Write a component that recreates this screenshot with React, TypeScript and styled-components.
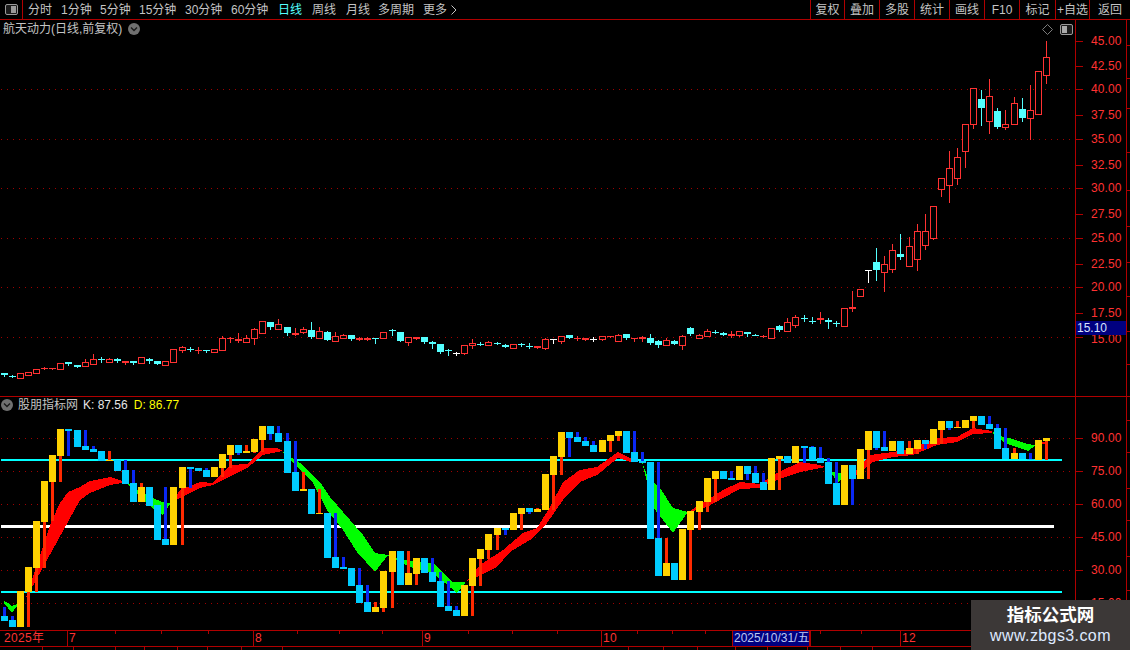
import styled, { createGlobalStyle } from "styled-components";

const FONT = `"Liberation Sans", "Noto Sans CJK SC", sans-serif`;
const LINE_RED = "#b00000";
const TEXT_RED = "#ff3232";
const CANDLE_RED = "#ff3232";
const CANDLE_CYAN = "#54ffff";

const GlobalStyle = createGlobalStyle`
  html, body {
    margin: 0;
    padding: 0;
    background: #000;
  }
`;

const Page = styled.div`
  position: relative;
  width: 1130px;
  height: 650px;
  overflow: hidden;
  background: #000;
  color: #c4c4c4;
  font: 12px/14px ${FONT};
`;

const Toolbar = styled.div`
  display: flex;
  height: 19px;
  border-bottom: 1px solid ${LINE_RED};
`;

const IconCell = styled.div`
  display: flex;
  align-items: center;
  justify-content: center;
  flex: none;
  width: 23px;
  border-right: 1px solid ${LINE_RED};
  box-sizing: border-box;
`;

const Periods = styled.div`
  display: flex;
  align-items: center;
  flex: 1;
  padding-left: 5px;
`;

const Period = styled.span<{ $w: number; $active?: boolean }>`
  display: flex;
  align-items: center;
  gap: 4px;
  flex: none;
  width: ${(p) => p.$w}px;
  color: ${(p) => (p.$active ? "#54ffff" : "#c4c4c4")};
  white-space: nowrap;
`;

const Actions = styled.div`
  display: flex;
`;

const Action = styled.span<{ $w: number }>`
  display: flex;
  align-items: center;
  justify-content: center;
  width: ${(p) => p.$w}px;
  box-sizing: border-box;
  border-left: 1px solid ${LINE_RED};
  white-space: nowrap;
`;

const Panel = styled.div<{ $h: number }>`
  display: flex;
  height: ${(p) => p.$h}px;
`;

const MainPanel = styled(Panel)`
  border-bottom: 1px solid ${LINE_RED};
`;

const ChartArea = styled.div`
  position: relative;
  flex: none;
  width: 1075px;
`;

const ChartSvg = styled.svg`
  display: block;
  width: 100%;
  height: 100%;
`;

const Legend = styled.div<{ $top: number }>`
  position: absolute;
  top: ${(p) => p.$top}px;
  left: 1px;
  display: flex;
  align-items: center;
  height: 14px;
  white-space: nowrap;
`;

const Title = styled.span`
  margin: 0 6px 0 2px;
`;

const IndicatorName = styled.span`
  margin: 0 5px;
`;

const Reading = styled.span<{ $color: string }>`
  margin-right: 6px;
  color: ${(p) => p.$color};
`;

const CornerIcons = styled.div`
  position: absolute;
  top: 4px;
  right: 2px;
  display: flex;
  align-items: center;
  gap: 7px;
`;

const Axis = styled.div`
  position: relative;
  flex: 1;
  border-left: 1px solid ${LINE_RED};
`;

const AxisTicks = styled.svg`
  position: absolute;
  inset: 0;
  width: 100%;
  height: 100%;
`;

const AxisLabel = styled.span`
  position: absolute;
  left: 15px;
  color: ${TEXT_RED};
  line-height: 8px;
  letter-spacing: 0.1px;
`;

const PriceTag = styled.span`
  position: absolute;
  left: 0;
  top: 301px;
  width: 50px;
  height: 14px;
  padding-left: 1px;
  box-sizing: border-box;
  background: #000080;
  color: #d8e4ff;
  line-height: 14px;
`;

const TimeAxis = styled.div`
  display: flex;
  height: 15px;
  border-top: 1px solid ${LINE_RED};
  border-bottom: 1px solid ${LINE_RED};
`;

const TimeCell = styled.span<{ $w: number; $first?: boolean }>`
  position: relative;
  flex: none;
  width: ${(p) => p.$w}px;
  padding-left: ${(p) => (p.$first ? 4 : 1)}px;
  box-sizing: border-box;
  border-left: ${(p) => (p.$first ? "none" : `1px solid ${LINE_RED}`)};
  color: ${TEXT_RED};
  line-height: 15px;
  letter-spacing: 0.3px;
`;

const DateCell = styled.span`
  flex: none;
  width: 78px;
  padding-left: 1px;
  box-sizing: border-box;
  border-left: 1px solid ${LINE_RED};
  border-right: 1px solid ${LINE_RED};
  background: #000080;
  color: #bcc8f0;
  line-height: 15px;
  white-space: nowrap;
`;

const TimeTick = styled.i`
  position: absolute;
  top: 0;
  width: 1px;
  height: 3px;
  background: ${LINE_RED};
`;

const BottomStrip = styled.svg`
  display: block;
  width: 1130px;
  height: 3px;
`;

const Watermark = styled.div`
  position: absolute;
  right: 0;
  bottom: 0;
  display: flex;
  flex-direction: column;
  align-items: center;
  width: 159px;
  height: 50px;
  padding-top: 4px;
  box-sizing: border-box;
  background: #3c3837;
`;

const WatermarkTitle = styled.span`
  color: #fff;
  font-size: 17.5px;
  font-weight: 700;
  line-height: 22px;
`;

const WatermarkUrl = styled.span`
  color: #dfeaff;
  font-size: 16px;
  line-height: 20px;
  letter-spacing: 0.4px;
`;

type CandleKind = "r" | "s" | "c" | "w";
type Candle = [CandleKind, number, number, number?, number?];

// price candles, in page pixels: kind, body top, body bottom, high, low
const CANDLES: Candle[] = [
  ["c", 373, 375, 373, 376], ["c", 376, 377, 375, 377], ["r", 373, 378], ["r", 372, 375], ["r", 369, 373],
  ["s", 368, 369, 367, 369], ["s", 368, 369], ["r", 363, 369], ["c", 362, 364, 362, 365], ["c", 365, 367],
  ["r", 362, 366, 359, 366], ["r", 359, 364, 354, 364], ["c", 359, 360, 357, 362], ["r", 359, 362, 358, 362], ["c", 359, 361, 358, 362],
  ["s", 361, 363, 361, 364], ["c", 361, 363, 361, 364], ["r", 357, 363], ["c", 359, 361, 358, 363], ["c", 361, 364],
  ["r", 361, 365], ["r", 349, 362], ["r", 347, 350, 346, 352], ["c", 349, 350, 347, 351], ["s", 350, 350, 347, 353],
  ["c", 350, 351, 350, 352], ["r", 349, 352], ["r", 338, 350, 336, 350], ["s", 338, 339, 337, 342], ["s", 339, 341, 333, 342],
  ["r", 338, 342, 335, 342], ["r", 329, 338, 328, 344], ["r", 321, 333], ["c", 322, 327, 322, 329], ["r", 324, 329, 319, 329],
  ["c", 327, 333, 327, 335], ["s", 333, 335, 328, 335], ["r", 329, 332, 327, 333], ["c", 330, 337, 322, 338], ["r", 331, 338, 327, 338],
  ["c", 332, 340, 331, 340], ["r", 336, 341, 332, 341], ["r", 335, 338, 334, 338], ["c", 335, 339, 335, 340], ["s", 338, 340, 337, 340],
  ["s", 338, 340, 337, 340], ["c", 338, 339, 338, 343], ["r", 332, 338], ["c", 330, 331, 329, 335], ["c", 332, 341, 332, 341],
  ["r", 337, 342, 337, 345], ["s", 337, 339], ["c", 337, 342, 337, 343], ["c", 342, 344, 341, 348], ["c", 344, 352, 344, 353],
  ["c", 350, 351, 349, 355], ["w", 353, 354, 352, 355], ["r", 345, 353, 345, 354], ["r", 343, 345, 339, 348], ["c", 344, 344, 342, 345],
  ["r", 342, 345, 341, 345], ["c", 343, 344, 342, 344], ["c", 345, 347, 344, 347], ["r", 344, 348], ["c", 344, 345, 343, 346],
  ["c", 346, 346, 343, 348], ["s", 346, 348], ["r", 339, 348, 338, 349], ["w", 339, 340, 339, 343], ["r", 336, 341, 336, 343],
  ["c", 335, 338], ["s", 338, 339, 336, 340], ["s", 338, 340], ["w", 339, 339, 337, 341], ["r", 336, 339, 336, 340],
  ["s", 336, 337], ["r", 335, 341, 334, 341], ["c", 334, 338, 334, 339], ["s", 338, 339, 338, 341], ["s", 337, 339, 336, 341],
  ["c", 338, 343, 334, 344], ["c", 341, 345, 340, 347], ["r", 340, 345, 338, 345], ["c", 341, 344, 340, 344], ["r", 336, 345, 335, 349],
  ["c", 328, 334, 327, 335], ["r", 335, 338, 334, 338], ["r", 331, 336, 329, 336], ["c", 332, 333, 330, 333], ["c", 333, 335, 332, 335],
  ["s", 334, 336, 331, 337], ["r", 331, 335, 331, 336], ["c", 332, 334, 332, 336], ["c", 335, 335, 334, 335], ["s", 336, 337, 335, 337],
  ["r", 328, 338], ["c", 326, 330, 325, 331], ["r", 322, 331, 318, 331], ["r", 317, 325, 315, 327], ["c", 318, 319, 315, 321],
  ["c", 321, 322, 317, 323], ["s", 318, 320, 312, 323], ["c", 320, 322, 318, 328], ["c", 323, 324, 321, 326], ["r", 308, 326],
  ["s", 307, 309, 291, 311], ["r", 289, 296], ["w", 270, 271, 270, 282], ["c", 262, 270, 248, 280], ["r", 264, 272, 256, 291],
  ["r", 250, 269, 244, 272], ["c", 254, 257, 234, 259], ["r", 246, 266, 237, 266], ["r", 231, 259, 224, 270], ["r", 231, 245, 214, 249],
  ["r", 206, 238, 206, 239], ["r", 178, 189, 178, 196], ["r", 168, 185, 151, 202], ["r", 157, 178, 148, 184], ["r", 124, 151, 124, 167],
  ["r", 88, 124, 88, 128], ["c", 99, 108, 90, 125], ["r", 96, 121, 79, 133], ["c", 111, 127, 108, 128], ["r", 124, 127, 110, 129],
  ["r", 103, 124, 97, 124], ["c", 109, 118, 98, 121], ["r", 110, 118, 85, 139], ["r", 71, 114], ["r", 57, 75, 41, 83],
];

type Bar = ["g" | "b", number, number, number?, number?];

// indicator bars: kind, body top, body bottom, thin bar top, thin bar bottom
const BARS: Bar[] = [
  ["b", 616, 621, 607, 616], ["b", 620, 627, 616, 620], ["g", 591, 627], ["g", 567, 592, 592, 627], ["g", 521, 568, 568, 592],
  ["g", 481, 522, 522, 568], ["g", 455, 482, 482, 521], ["g", 429, 456, 456, 482], ["b", 429, 431, 431, 456], ["b", 430, 447],
  ["b", 446, 450, 430, 446], ["b", 449, 452, 446, 449], ["b", 451, 461], ["g", 460, 461, 451, 460], ["b", 460, 471],
  ["b", 470, 484, 460, 470], ["b", 483, 502, 470, 483], ["g", 487, 502, 483, 487], ["b", 487, 506], ["b", 505, 540],
  ["b", 539, 545, 487, 539], ["g", 487, 545], ["g", 467, 488, 488, 545], ["b", 467, 469, 469, 488], ["b", 468, 471],
  ["b", 470, 477, 468, 470], ["g", 467, 477], ["g", 454, 468, 468, 477], ["g", 445, 455, 455, 468], ["b", 445, 453, 453, 455],
  ["g", 451, 453, 445, 451], ["g", 439, 452, 452, 453], ["g", 426, 440, 440, 452], ["b", 426, 434, 434, 440], ["b", 433, 442, 426, 433],
  ["b", 441, 473, 433, 441], ["b", 472, 491, 441, 472], ["g", 489, 491, 472, 489], ["b", 489, 514], ["g", 513, 514, 489, 513],
  ["b", 513, 558], ["b", 557, 568, 513, 557], ["b", 567, 569, 557, 567], ["b", 568, 586], ["b", 585, 603, 568, 585],
  ["b", 602, 612, 585, 602], ["g", 607, 612, 602, 607], ["g", 571, 608, 608, 612], ["g", 551, 572, 572, 608], ["b", 551, 585],
  ["g", 573, 585, 551, 573], ["g", 558, 574, 574, 585], ["b", 558, 573], ["b", 572, 582, 558, 572], ["b", 581, 607, 572, 581],
  ["b", 606, 611, 581, 606], ["b", 610, 616, 606, 610], ["g", 585, 616], ["g", 558, 586, 586, 616], ["g", 549, 559, 559, 586],
  ["g", 534, 550, 550, 559], ["g", 528, 535, 535, 550], ["b", 528, 530, 530, 535], ["g", 513, 530], ["g", 508, 514, 514, 530],
  ["b", 508, 512, 512, 514], ["g", 509, 512, 508, 509], ["g", 474, 510], ["g", 456, 475, 475, 510], ["g", 432, 457, 457, 475],
  ["b", 432, 438, 438, 457], ["b", 437, 442, 432, 437], ["b", 441, 446, 437, 441], ["b", 445, 452, 441, 445], ["g", 440, 452],
  ["g", 435, 441, 441, 452], ["g", 431, 436, 436, 441], ["b", 431, 453], ["b", 452, 462, 431, 452], ["b", 461, 463, 452, 461],
  ["b", 462, 539], ["b", 538, 576, 462, 538], ["g", 563, 576, 538, 563], ["b", 563, 580], ["g", 529, 580],
  ["g", 511, 530, 530, 580], ["g", 501, 512, 512, 530], ["g", 478, 502, 502, 512], ["g", 471, 479, 479, 502], ["b", 471, 479],
  ["b", 478, 480, 471, 478], ["g", 466, 480], ["b", 466, 474, 474, 480], ["b", 473, 483, 466, 473], ["b", 482, 490, 473, 482],
  ["g", 458, 490], ["g", 456, 459, 459, 490], ["b", 456, 463], ["g", 446, 463], ["b", 446, 448, 448, 463],
  ["b", 447, 460, 446, 447], ["b", 458, 463, 447, 458], ["b", 462, 484, 458, 462], ["b", 483, 505, 462, 483], ["g", 465, 505],
  ["b", 465, 479, 479, 505], ["g", 449, 479], ["g", 431, 450, 450, 479], ["b", 431, 448, 448, 450], ["b", 447, 451, 431, 447],
  ["g", 441, 451], ["b", 441, 454], ["g", 448, 454, 441, 448], ["g", 440, 449, 449, 454], ["b", 440, 444, 444, 449],
  ["g", 429, 444], ["g", 421, 430, 430, 444], ["b", 421, 428, 428, 430], ["g", 427, 428, 421, 427], ["g", 420, 428],
  ["g", 416, 421, 421, 428], ["b", 416, 425], ["b", 424, 429, 416, 424], ["b", 428, 449, 424, 428], ["b", 448, 459, 428, 448],
  ["g", 453, 459, 448, 453], ["b", 453, 459], ["b", 459, 460, 453, 459], ["g", 440, 460], ["g", 438, 441, 441, 460],
];

type Pt = [number, number];
type RibbonPart = { color: string; top: Pt[]; bottom: Pt[] };

const RED = "#ff0000";
const GREEN = "#00ff00";

const RIBBON: RibbonPart[] = [
  { color: GREEN, top: [[4, 601], [8, 603], [12, 606], [17, 604]], bottom: [[4, 603], [8, 608], [12, 613], [17, 606]] },
  { color: RED, top: [[25, 600], [52, 520], [60, 503], [68, 492], [80, 487], [90, 481], [110, 477], [122, 481]], bottom: [[25, 600], [69, 520], [80, 500], [90, 493], [110, 485], [122, 483]] },
  { color: GREEN, top: [[126, 482], [135, 488], [150, 497], [165, 503], [170, 503]], bottom: [[126, 482], [140, 497], [155, 510], [163, 515], [170, 504]] },
  { color: RED, top: [[171, 503], [180, 490], [200, 482], [213, 483], [230, 465], [247, 464], [263, 448], [277, 448], [283, 451]], bottom: [[171, 503], [180, 498], [200, 488], [213, 485], [233, 475], [247, 468], [263, 455], [277, 452], [283, 451]] },
  { color: GREEN, top: [[283, 452], [300, 463], [320, 482], [330, 497], [350, 520], [363, 535], [375, 553], [388, 555]], bottom: [[283, 452], [300, 470], [313, 483], [327, 510], [343, 530], [357, 552], [375, 572], [388, 555]] },
  { color: GREEN, top: [[388, 555], [403, 560], [433, 563], [453, 582], [465, 582]], bottom: [[388, 556], [410, 567], [433, 573], [457, 593], [465, 583]] },
  { color: RED, top: [[467, 581], [480, 565], [503, 550], [523, 533], [537, 528], [550, 507], [563, 482], [580, 470], [597, 467], [618, 452], [630, 458], [640, 461]], bottom: [[467, 581], [477, 577], [497, 567], [510, 552], [533, 538], [547, 523], [563, 500], [580, 482], [597, 475], [618, 458], [630, 462], [640, 461]] },
  { color: GREEN, top: [[642, 462], [648, 478], [660, 488], [673, 508], [688, 512]], bottom: [[642, 462], [653, 507], [673, 533], [688, 512]] },
  { color: RED, top: [[690, 511], [707, 500], [723, 490], [740, 482], [760, 484], [777, 473], [800, 462], [820, 465], [825, 467]], bottom: [[690, 512], [707, 507], [723, 498], [740, 489], [760, 488], [777, 480], [800, 472], [820, 468], [825, 467]] },
  { color: GREEN, top: [[826, 467], [830, 472], [843, 473], [848, 475]], bottom: [[826, 467], [838, 482], [848, 475]] },
  { color: RED, top: [[849, 476], [857, 470], [870, 455], [893, 452], [913, 448], [937, 438], [957, 437], [973, 428], [992, 431]], bottom: [[849, 478], [857, 475], [873, 462], [893, 457], [913, 455], [937, 445], [957, 442], [973, 434], [992, 433]] },
  { color: GREEN, top: [[993, 432], [1003, 437], [1010, 438], [1027, 444], [1035, 445]], bottom: [[993, 433], [997, 438], [1010, 445], [1028, 451], [1035, 446]] },
  { color: RED, top: [[1036, 445], [1042, 442], [1048, 442]], bottom: [[1036, 446], [1042, 444], [1048, 444]] },
];

const PERIODS: [string, number][] = [
  ["分时", 33], ["1分钟", 39], ["5分钟", 39], ["15分钟", 46], ["30分钟", 46], ["60分钟", 47],
  ["日线", 34], ["周线", 34], ["月线", 32], ["多周期", 45],
];

const ACTIONS: [string, number][] = [
  ["复权", 34], ["叠加", 35], ["多股", 35], ["统计", 35], ["画线", 35],
  ["F10", 35], ["标记", 36], ["+自选", 34], ["返回", 41],
];

const PRICE_LABELS: [string, number][] = [
  ["45.00", 41], ["42.50", 66], ["40.00", 89], ["37.50", 115], ["35.00", 139], ["32.50", 165],
  ["30.00", 188], ["27.50", 214], ["25.00", 238], ["22.50", 264], ["20.00", 287], ["17.50", 313], ["15.00", 339],
];

const KD_LABELS: [string, number][] = [
  ["90.00", 438], ["75.00", 471], ["60.00", 504], ["45.00", 537], ["30.00", 570], ["15.00", 603],
];

const PRICE_DOTS = [89, 139, 188, 238, 287, 337];
const KD_DOTS = [438, 471, 504, 537, 570, 603];
const LOWER_TICKS = [42, 73, 115, 144, 177, 207, 241, 282, 628, 663, 697, 735, 767, 807, 840, 872];

const candleX = (i: number) => Math.floor(4.3 + 8.078 * i);

function PanelIcon({ flip }: { flip?: boolean }) {
  return (
    <svg width="13" height="11" viewBox="0 0 13 11">
      <rect x="0.5" y="0.5" width="12" height="10" rx="1.5" fill="#1c1c1c" stroke="#9a9a9a" />
      <rect x={flip ? 2 : 6} y="2" width="5" height="7" fill={flip ? "#aaa" : "#9a9a9a"} />
    </svg>
  );
}

function ChevronBadge() {
  return (
    <svg width="12" height="12" viewBox="0 0 12 12">
      <circle cx="6" cy="6" r="6" fill="#707070" />
      <path d="M3 4.5 6 7.5 9 4.5" fill="none" stroke="#1a1a1a" strokeWidth="1.4" />
    </svg>
  );
}

function Diamond() {
  return (
    <svg width="11" height="11" viewBox="0 0 11 11">
      <path d="M5.5.5 10.5 5.5 5.5 10.5.5 5.5Z" fill="none" stroke="#7c7c7c" />
    </svg>
  );
}

function MoreArrow() {
  return (
    <svg width="6" height="10" viewBox="0 0 6 10">
      <path d="M.5.5 5 5 .5 9.5" fill="none" stroke="#c4c4c4" />
    </svg>
  );
}

function DottedLines({ rows }: { rows: number[] }) {
  return (
    <>
      {rows.map((y) => (
        <line key={y} x1="1" x2="1075" y1={y + 0.5} y2={y + 0.5} stroke="#a00000" strokeDasharray="1 5" />
      ))}
    </>
  );
}

function PriceCandle({ c, i }: { c: Candle; i: number }) {
  const [kind, top, bot, hi = top, lo = bot] = c;
  const x = candleX(i);
  const color = kind === "c" ? CANDLE_CYAN : kind === "w" ? "#ffffff" : CANDLE_RED;
  return (
    <g>
      <line x1={x + 0.5} x2={x + 0.5} y1={hi} y2={lo + 1} stroke={color} />
      {kind === "r" ? (
        <rect x={x - 2.5} y={top + 0.5} width="6" height={bot - top} fill="#000" stroke={color} />
      ) : (
        <rect x={x - 3} y={top} width="7" height={Math.max(bot - top, 1)} fill={color} />
      )}
    </g>
  );
}

function KdBar({ b, i }: { b: Bar; i: number }) {
  const [kind, top, bot, wickTop, wickBot] = b;
  const x = candleX(i);
  const up = kind === "g";
  return (
    <g>
      {wickTop !== undefined && wickBot !== undefined ? (
        <rect x={x - 1} y={wickTop} width="3" height={wickBot - wickTop} fill={up ? "#ff2a00" : "#0a28f5"} />
      ) : null}
      <rect x={x - 3} y={top} width="7" height={bot - top} fill={up ? "#ffd200" : "#00ccff"} />
    </g>
  );
}

function RightScale({ ticks, extra, offset }: { ticks: number[]; extra: number[]; offset: number }) {
  return (
    <AxisTicks shapeRendering="crispEdges">
      {ticks.map((y) => (
        <line key={y} x1="0" x2="7" y1={y - offset + 0.5} y2={y - offset + 0.5} stroke={LINE_RED} />
      ))}
      <line x1="50.5" x2="50.5" y1="0" y2="400" stroke={LINE_RED} />
      {extra.map((y) => (
        <line key={y} x1="51" x2="55" y1={y - offset + 0.5} y2={y - offset + 0.5} stroke={LINE_RED} />
      ))}
    </AxisTicks>
  );
}

export default function App() {
  return (
    <Page>
      <GlobalStyle />
      <Toolbar>
        <IconCell>
          <PanelIcon />
        </IconCell>
        <Periods>
          {PERIODS.map(([label, w]) => (
            <Period key={label} $w={w} $active={label === "日线"}>
              {label}
            </Period>
          ))}
          <Period $w={40}>
            更多
            <MoreArrow />
          </Period>
        </Periods>
        <Actions>
          {ACTIONS.map(([label, w]) => (
            <Action key={label} $w={w}>
              {label}
            </Action>
          ))}
        </Actions>
      </Toolbar>

      <MainPanel $h={376}>
        <ChartArea>
          <ChartSvg viewBox="0 20 1075 376" shapeRendering="crispEdges">
            <DottedLines rows={PRICE_DOTS} />
            {CANDLES.map((c, i) => (
              <PriceCandle key={i} c={c} i={i} />
            ))}
          </ChartSvg>
          <Legend $top={2}>
            <Title>航天动力(日线,前复权)</Title>
            <ChevronBadge />
          </Legend>
          <CornerIcons>
            <Diamond />
            <PanelIcon flip />
          </CornerIcons>
        </ChartArea>
        <Axis>
          <RightScale
            offset={20}
            ticks={[41, 66, 89, 115, 139, 165, 188, 214, 238, 264, 287, 313, 337]}
            extra={[45, 78, 108, 152, 190, 226, 262, 296, 331, 364]}
          />
          {PRICE_LABELS.map(([label, y]) => (
            <AxisLabel key={label} style={{ top: y - 24 }}>
              {label}
            </AxisLabel>
          ))}
          <PriceTag>15.10</PriceTag>
        </Axis>
      </MainPanel>

      <Panel $h={233}>
        <ChartArea>
          <ChartSvg viewBox="0 397 1075 233" shapeRendering="crispEdges">
            <DottedLines rows={KD_DOTS} />
            <rect x="1" y="459" width="1061" height="2" fill="#00ffff" />
            <rect x="1" y="525" width="1053" height="3" fill="#ffffff" />
            <rect x="1" y="591" width="1061" height="2" fill="#00ffff" />
            {RIBBON.map((part, i) => (
              <polygon
                key={i}
                fill={part.color}
                points={[...part.top, ...[...part.bottom].reverse()].map((p) => p.join(",")).join(" ")}
              />
            ))}
            {BARS.map((b, i) => (
              <KdBar key={i} b={b} i={i} />
            ))}
          </ChartSvg>
          <Legend $top={1}>
            <ChevronBadge />
            <IndicatorName>股朋指标网</IndicatorName>
            <Reading $color="#e6e6e6">K: 87.56</Reading>
            <Reading $color="#ffff00">D: 86.77</Reading>
          </Legend>
        </ChartArea>
        <Axis>
          <RightScale offset={397} ticks={KD_DOTS} extra={[420, 452, 488, 520, 556, 590, 612]} />
          {KD_LABELS.map(([label, y]) => (
            <AxisLabel key={label} style={{ top: y - 401 }}>
              {label}
            </AxisLabel>
          ))}
        </Axis>
      </Panel>

      <TimeAxis>
        <TimeCell $w={67} $first>
          2025年
        </TimeCell>
        <TimeCell $w={186}>
          7
          <TimeTick style={{ left: 47 }} />
          <TimeTick style={{ left: 93 }} />
          <TimeTick style={{ left: 140 }} />
        </TimeCell>
        <TimeCell $w={169}>
          8
          <TimeTick style={{ left: 43 }} />
          <TimeTick style={{ left: 85 }} />
          <TimeTick style={{ left: 128 }} />
        </TimeCell>
        <TimeCell $w={179}>
          9
          <TimeTick style={{ left: 45 }} />
          <TimeTick style={{ left: 89 }} />
          <TimeTick style={{ left: 134 }} />
        </TimeCell>
        <TimeCell $w={131}>
          10
          <TimeTick style={{ left: 35 }} />
          <TimeTick style={{ left: 70 }} />
          <TimeTick style={{ left: 103 }} />
        </TimeCell>
        <DateCell>2025/10/31/五</DateCell>
        <TimeCell $w={90}>
          <TimeTick style={{ left: 9 }} />
          <TimeTick style={{ left: 50 }} />
        </TimeCell>
        <TimeCell $w={230}>12</TimeCell>
      </TimeAxis>

      <BottomStrip shapeRendering="crispEdges">
        {LOWER_TICKS.map((x) => (
          <line key={x} x1={x + 0.5} x2={x + 0.5} y1="0" y2="3" stroke={LINE_RED} />
        ))}
      </BottomStrip>

      <Watermark>
        <WatermarkTitle>指标公式网</WatermarkTitle>
        <WatermarkUrl>www.zbgs3.com</WatermarkUrl>
      </Watermark>
    </Page>
  );
}
